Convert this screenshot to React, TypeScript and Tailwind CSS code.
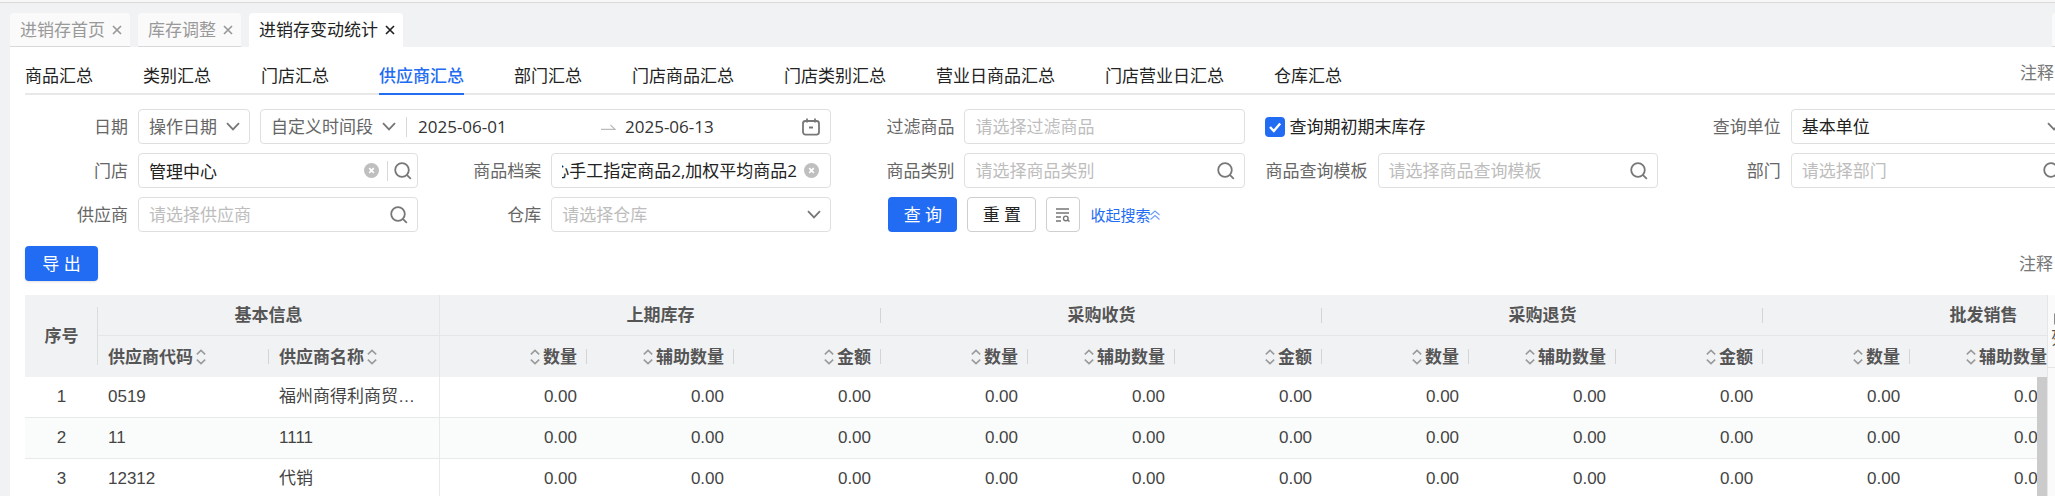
import { useEffect, useRef, type ReactNode } from "react";

const FIELD = "flex h-[35px] min-w-0 flex-1 items-center rounded border border-[#dfdfdf] bg-white";
const INPUT = "h-full min-w-0 flex-1 bg-transparent pl-[10px] text-[#222] outline-none placeholder:text-[#bdbdbd]";
const TH = "relative p-0 font-bold text-[#555]";

function Chevron() {
  return (
    <svg className="pointer-events-none h-[9px] w-[14px] shrink-0" viewBox="0 0 14 9" fill="none" stroke="#777" strokeWidth="1.8">
      <path d="M1 1.2 7 7.4 13 1.2" />
    </svg>
  );
}

function Search() {
  return (
    <svg className="size-[18px] shrink-0" viewBox="0 0 18 18" fill="none" stroke="#777" strokeWidth="1.8">
      <circle cx="8" cy="8" r="6.8" />
      <path d="m12.8 12.8 4 4" />
    </svg>
  );
}

function Clear() {
  return (
    <svg className="size-[15px] shrink-0" viewBox="0 0 15 15">
      <circle cx="7.5" cy="7.5" r="7.5" fill="#bfbfbf" />
      <path d="m5.2 5.2 4.6 4.6m0-4.6-4.6 4.6" stroke="#fff" strokeWidth="1.7" />
    </svg>
  );
}

function Sorter() {
  return (
    <svg className="h-[16px] w-[10px] shrink-0" viewBox="0 0 10 16" fill="none" stroke="#999" strokeWidth="1.5">
      <path d="M.8 5.4 5 1.4l4.2 4M.8 10.6l4.2 4 4.2-4" />
    </svg>
  );
}

function Close() {
  return (
    <svg className="size-[10px]" viewBox="0 0 10 10" fill="none" stroke="currentColor" strokeWidth="1.7">
      <path d="m1 1 8 8M9 1 1 9" />
    </svg>
  );
}

function Item({ id, label, className = "", children }: { id: string; label: string; className?: string; children: ReactNode }) {
  return (
    <div className={`flex min-w-0 items-center ${className}`}>
      <label htmlFor={id} className="w-[113px] shrink-0 pr-[10px] text-right whitespace-nowrap text-[#666]">
        {label}
      </label>
      {children}
    </div>
  );
}

function SearchField({ id, label }: { id: string; label: string }) {
  return (
    <Item id={id} label={label}>
      <div className={`${FIELD} pr-[9px]`}>
        <input id={id} className={INPUT} placeholder={`请选择${label}`} />
        <Search />
      </div>
    </Item>
  );
}

const pageTabs = [
  { name: "进销存首页", active: false },
  { name: "库存调整", active: false },
  { name: "进销存变动统计", active: true },
];
const reports = ["商品汇总", "类别汇总", "门店汇总", "供应商汇总", "部门汇总", "门店商品汇总", "门店类别汇总", "营业日商品汇总", "门店营业日汇总", "仓库汇总"];
const groups = ["上期库存", "采购收货", "采购退货", "批发销售"];
const measures = ["数量", "辅助数量", "金额"];
const suppliers = [
  { code: "0519", name: "福州商得利商贸有限公司" },
  { code: "11", name: "1111" },
  { code: "12312", name: "代销" },
];

export default function App() {
  const goods = useRef<HTMLInputElement>(null);
  useEffect(() => {
    if (goods.current) goods.current.scrollLeft = goods.current.scrollWidth;
  }, []);

  return (
    <div className="flex h-screen flex-col overflow-hidden bg-[#f1f2f4] font-['Open_Sans','Noto_Sans_CJK_SC',sans-serif] text-[17px] leading-6 text-[#222]">
      <div className="h-[3px] shrink-0 border-b border-[#d9d9d9] bg-[#f7f7f7]" />
      <nav className="flex h-11 shrink-0 items-end gap-2 overflow-hidden pl-[10px]">
        {pageTabs.map((t) => (
          <div
            key={t.name}
            className={`flex h-[34px] shrink-0 items-center gap-[7px] rounded-t pr-[8px] pl-[10px] ${t.active ? "bg-white text-[#222]" : "border-b border-[#d9d9d9] bg-[#fafafa] text-[#999]"}`}
          >
            <a href="#">{t.name}</a>
            <button aria-label={`关闭${t.name}`}>
              <Close />
            </button>
          </div>
        ))}
        <div className="-mr-5 ml-auto h-[34px] w-[23px] shrink-0 rounded-t border-b border-[#d9d9d9] bg-[#fafafa]" />
      </nav>

      <main className="ml-[10px] flex min-h-0 flex-1 flex-col overflow-hidden bg-white">
        <div className="-mr-4 ml-[15px] flex min-h-0 flex-1 flex-col">
          <div className="flex h-12 shrink-0 items-stretch gap-[50px] border-b-2 border-[#e8e8e8]">
            {reports.map((r) => (
              <a
                key={r}
                href="#"
                className={`-mb-[2px] shrink-0 border-b-2 pt-[17px] whitespace-nowrap ${r === "供应商汇总" ? "border-[#226cf3] font-medium text-[#226cf3]" : "border-transparent"}`}
              >
                {r}
              </a>
            ))}
            <a href="#" className="mr-[17px] ml-auto pt-[14px] whitespace-nowrap text-[#777]">注释</a>
          </div>

          <form className="mt-[14px] grid shrink-0 grid-cols-5 gap-x-5 gap-y-[9px]" onSubmit={(e) => e.preventDefault()}>
            <Item id="date-kind" label="日期" className="col-span-2">
              <div className="relative mr-[10px] flex h-[35px] w-[112px] shrink-0 items-center rounded border border-[#dfdfdf] pr-[9px]">
                <select id="date-kind" className="absolute inset-0 appearance-none bg-transparent pl-[10px] text-[#666] outline-none">
                  <option>操作日期</option>
                </select>
                <span className="ml-auto flex">
                  <Chevron />
                </span>
              </div>
              <div className={FIELD}>
                <div className="relative flex w-[135px] shrink-0 items-center">
                  <select aria-label="时间段" className="w-full appearance-none bg-transparent pl-[10px] text-[#666] outline-none">
                    <option>自定义时间段</option>
                  </select>
                  <span className="pointer-events-none absolute right-0 flex">
                    <Chevron />
                  </span>
                </div>
                <span className="ml-[10px] h-5 w-px bg-[#d9d9d9]" />
                <input aria-label="开始日期" defaultValue="2025-06-01" className="ml-[11px] w-[183px] text-[#333] outline-none" />
                <svg className="h-2 w-[15px] shrink-0" viewBox="0 0 15 8" fill="none" stroke="#bbb" strokeWidth="1.2">
                  <path d="M0 6.4h14L9.5 2" />
                </svg>
                <input aria-label="结束日期" defaultValue="2025-06-13" className="ml-[9px] min-w-0 flex-1 text-[#333] outline-none" />
                <svg className="mr-[10px] size-[18px] shrink-0" viewBox="0 0 18 18" fill="none" stroke="#777" strokeWidth="1.8">
                  <rect x="1" y="3" width="16" height="13.6" rx="2.5" />
                  <path d="M5 .5v4M13 .5v4M7 9.5h4" />
                </svg>
              </div>
            </Item>
            <Item id="filter" label="过滤商品">
              <div className={FIELD}>
                <input id="filter" className={INPUT} placeholder="请选择过滤商品" />
              </div>
            </Item>
            <div className="flex items-center">
              <div className="relative flex size-5 shrink-0">
                <input id="stock" type="checkbox" defaultChecked className="size-5 appearance-none rounded bg-[#226cf3]" />
                <svg className="pointer-events-none absolute inset-0 size-5" viewBox="0 0 20 20" fill="none" stroke="#fff" strokeWidth="2.4">
                  <path d="m5 10 3.8 4 6.4-7.6" />
                </svg>
              </div>
              <label htmlFor="stock" className="pl-[5px]">查询期初期末库存</label>
            </div>
            <Item id="unit" label="查询单位">
              <div className={`${FIELD} relative pr-[9px]`}>
                <select id="unit" className="absolute inset-0 appearance-none bg-transparent pl-[10px] text-[#222] outline-none">
                  <option>基本单位</option>
                </select>
                <span className="ml-auto flex">
                  <Chevron />
                </span>
              </div>
            </Item>

            <Item id="store" label="门店">
              <div className={`${FIELD} pr-[5px]`}>
                <input id="store" className={INPUT} defaultValue="管理中心" />
                <Clear />
                <span className="mr-[6px] ml-[8px] h-5 w-px bg-[#d9d9d9]" />
                <Search />
              </div>
            </Item>
            <Item id="goods" label="商品档案">
              <div className={`${FIELD} pr-[11px] pl-[10px]`}>
                <input id="goods" ref={goods} className="mr-[7px] min-w-0 flex-1 text-[#222] outline-none" defaultValue="管理中心手工指定商品2,加权平均商品2" />
                <Clear />
              </div>
            </Item>
            <SearchField id="category" label="商品类别" />
            <SearchField id="template" label="商品查询模板" />
            <SearchField id="department" label="部门" />

            <SearchField id="supplier" label="供应商" />
            <Item id="warehouse" label="仓库">
              <div className={`${FIELD} relative pr-[9px]`}>
                <select id="warehouse" className="absolute inset-0 appearance-none bg-transparent pl-[10px] text-[#bdbdbd] outline-none">
                  <option>请选择仓库</option>
                </select>
                <span className="ml-auto flex">
                  <Chevron />
                </span>
              </div>
            </Item>
            <div className="flex items-center gap-[10px] pl-[37px] whitespace-nowrap">
              <button className="h-[35px] w-[69px] shrink-0 rounded bg-[#226cf3] text-white">查 询</button>
              <button type="reset" className="h-[35px] w-[69px] shrink-0 rounded border border-[#cfcfcf]">重 置</button>
              <button type="button" aria-label="搜索设置" className="flex h-[35px] w-[34px] shrink-0 items-center justify-center rounded border border-[#cfcfcf]">
                <svg className="size-[14px]" viewBox="0 0 14 14" fill="none" stroke="#777" strokeWidth="1.4">
                  <path d="M0 1h13M0 5h13M0 9h5M0 13h5" />
                  <circle cx="9.8" cy="10.4" r="2.3" />
                  <path d="m11.5 12 2 1.6" />
                </svg>
              </button>
              <button type="button" className="flex items-center text-[15px] text-[#226cf3]">
                收起搜索
                <svg className="size-[10px]" viewBox="0 0 10 10" fill="none" stroke="#6b9cf7" strokeWidth="1.1">
                  <path d="M.5 5 5 1l4.5 4M.5 9.5l4.5-4 4.5 4" />
                </svg>
              </button>
            </div>
          </form>

          <div className="mt-[14px] flex shrink-0 items-center justify-between">
            <button className="h-[35px] w-[73px] rounded bg-[#226cf3] text-white shadow-sm">导 出</button>
            <a href="#" className="mr-[18px] text-[#777]">注释</a>
          </div>

          <div className="mt-[14px] flex min-h-0 flex-1">
            <div className="relative min-w-0 flex-1 overflow-hidden">
              <table className="w-[2179px] table-fixed border-separate border-spacing-0">
                <colgroup>
                  <col className="w-[73px]" />
                  <col className="w-[171px]" />
                  <col className="w-[171px]" />
                  {groups.flatMap((g) => measures.map((m) => <col key={g + m} className="w-[147px]" />))}
                </colgroup>
                <thead className="bg-[#f1f2f4]">
                  <tr className="h-[41px]">
                    <th rowSpan={2} className={TH}>
                      序号
                      <span className="absolute top-3 right-0 bottom-3 w-px bg-[#dcdcdc]" />
                    </th>
                    <th colSpan={2} className={`${TH} border-r border-b border-[#e6e6e8]`}>基本信息</th>
                    {groups.map((g) => (
                      <th key={g} colSpan={3} className={`${TH} border-b border-[#e6e6e8]`}>
                        {g}
                        <span className="absolute top-[13px] right-0 h-[15px] w-px bg-[#d4d4d6]" />
                      </th>
                    ))}
                  </tr>
                  <tr className="h-[41px]">
                    <th className={TH}>
                      <span className="flex items-center gap-[3px] pl-[10px]">
                        供应商代码
                        <Sorter />
                      </span>
                      <span className="absolute top-[13px] right-0 h-[15px] w-px bg-[#d4d4d6]" />
                    </th>
                    <th className={`${TH} border-r border-[#e6e6e8]`}>
                      <span className="flex items-center gap-[3px] pl-[10px]">
                        供应商名称
                        <Sorter />
                      </span>
                    </th>
                    {groups.flatMap((g) =>
                      measures.map((m) => (
                        <th key={g + m} className={TH}>
                          <span className="flex items-center justify-end gap-[3px] pr-[10px]">
                            <Sorter />
                            {m}
                          </span>
                          <span className="absolute top-[13px] right-0 h-[15px] w-px bg-[#d4d4d6]" />
                        </th>
                      )),
                    )}
                  </tr>
                </thead>
                <tbody className="font-['Liberation_Sans','Noto_Sans_CJK_SC',sans-serif] text-[#444] [&_td]:border-b [&_td]:border-[#e8eaea] [&>tr:nth-child(even)]:bg-[#fafcfb]">
                  {suppliers.map((s, i) => (
                    <tr key={s.code} className="h-[41px]">
                      <td className="p-0 text-center">{i + 1}</td>
                      <td className="py-0 pl-[10px]">{s.code}</td>
                      <td className="truncate border-r py-0 pr-5 pl-[10px]">{s.name}</td>
                      {groups.flatMap((g) =>
                        measures.map((m) => (
                          <td key={g + m} className="py-0 pr-[10px] text-right">0.00</td>
                        )),
                      )}
                    </tr>
                  ))}
                </tbody>
              </table>
              <div className="absolute top-[82px] right-0 bottom-0 w-[10px] bg-[#cbcbcb]" />
            </div>
            <aside className="w-6 shrink-0 border-l border-[#e6e6e8] bg-[#fafafb]">
              <button aria-label="列设置" className="flex h-[73px] w-full flex-col items-center justify-center border-b border-[#e6e6e8] text-[#555]">
                <svg className="mb-px size-3" viewBox="0 0 12 12" fill="none" stroke="#444" strokeWidth="1.2">
                  <path d="M1 1h4v10H1zM7 1h4v10H7z" />
                </svg>
                列
              </button>
            </aside>
          </div>
        </div>
      </main>
    </div>
  );
}
